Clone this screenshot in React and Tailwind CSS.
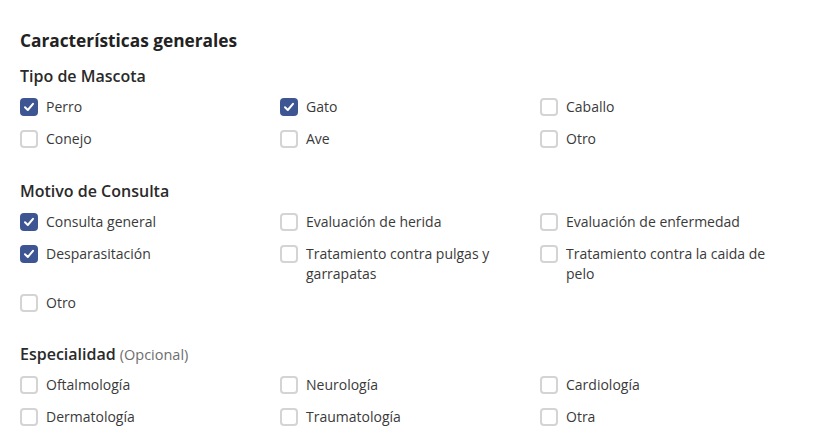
import { useState } from 'react';

const sections = [
  {
    title: 'Tipo de Mascota',
    options: [
      { label: 'Perro', checked: true },
      { label: 'Gato', checked: true },
      { label: 'Caballo' },
      { label: 'Conejo' },
      { label: 'Ave' },
      { label: 'Otro' },
    ],
  },
  {
    title: 'Motivo de Consulta',
    options: [
      { label: 'Consulta general', checked: true },
      { label: 'Evaluación de herida' },
      { label: 'Evaluación de enfermedad' },
      { label: 'Desparasitación', checked: true },
      { label: 'Tratamiento contra pulgas y garrapatas' },
      { label: 'Tratamiento contra la caida de pelo' },
      { label: 'Otro', tight: true },
    ],
  },
  {
    title: 'Especialidad',
    optional: true,
    options: [
      { label: 'Oftalmología' },
      { label: 'Neurología' },
      { label: 'Cardiología' },
      { label: 'Dermatología' },
      { label: 'Traumatología' },
      { label: 'Otra' },
    ],
  },
];

const CheckItem = ({ label, checked, tight }) => {
  const [isChecked, setIsChecked] = useState(!!checked);

  return (
    <label
      className={`flex items-start gap-2 cursor-pointer ${tight ? '-mt-[3px]' : ''}`}
      onClick={() => setIsChecked(!isChecked)}
    >
      <span
        className={
          isChecked
            ? 'mt-px flex h-[18px] w-[18px] shrink-0 items-center justify-center rounded-[4px] bg-[#3d5593]'
            : 'mt-px h-[18px] w-[18px] shrink-0 rounded-[4px] border-2 border-[#d4d4d4] bg-white'
        }
      >
        {isChecked ? (
          <svg width="12" height="12" viewBox="0 0 12 12" fill="none">
            <path
              d="M2 6.3 L4.8 9 L10 2.8"
              stroke="white"
              strokeWidth="2"
              strokeLinecap="round"
              strokeLinejoin="round"
            />
          </svg>
        ) : null}
      </span>
      <span className="pr-6 text-[14px] leading-5 text-[#3a3a3a]">{label}</span>
    </label>
  );
};

const App = () => {
  return (
    <div className="min-h-[445px] w-[817px] bg-white pl-5 pt-[29px] font-['Open_Sans',sans-serif]">
      <h1 className="text-[17.3px] font-bold leading-6 text-[#222]">Características generales</h1>
      {sections.map((section, i) => (
        <div
          key={section.title}
          className={i === 0 ? 'mt-3' : i === 1 ? 'mt-[31px]' : 'mt-[30px]'}
        >
          <h2 className="text-[16px] font-semibold leading-[22px] text-[#2a2a2a]">
            {section.title}
            {section.optional ? (
              <span className="ml-1 text-[14.5px] font-normal text-[#6e6e6e]">(Opcional)</span>
            ) : null}
          </h2>
          <div className={`${i === 2 ? 'mt-[9px]' : 'mt-[10px]'} grid grid-cols-[260px_260px_260px] gap-y-3`}>
            {section.options.map((opt) => (
              <CheckItem key={section.title + opt.label} {...opt} />
            ))}
          </div>
        </div>
      ))}
    </div>
  );
};

export default App;
